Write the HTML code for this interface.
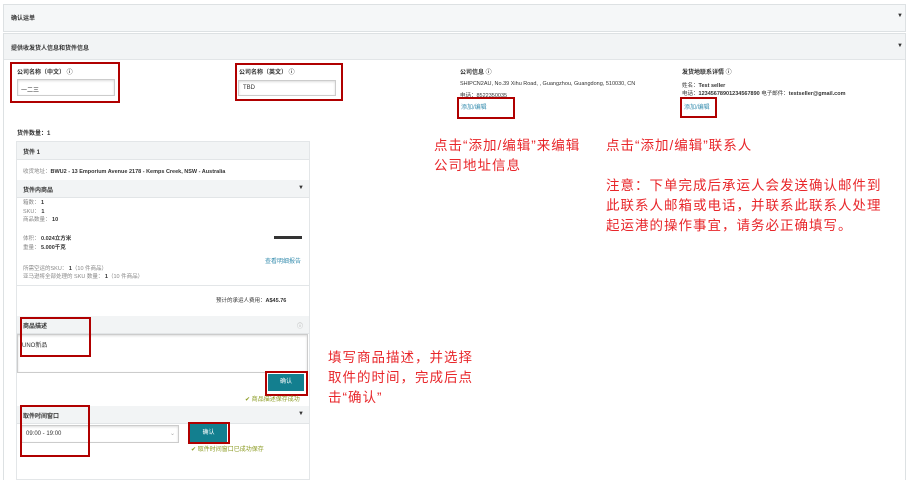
<!DOCTYPE html>
<html><head><meta charset="utf-8"><style>
*{box-sizing:border-box;margin:0;padding:0}
body{width:908px;height:480px;background:#fff;position:relative;overflow:hidden;font-family:"Liberation Sans","Noto Sans CJK SC",sans-serif;color:#333;font-size:6px}
.a{position:absolute}
.rb{position:absolute;border:2px solid #b00000}
.red{position:absolute;color:#e8262a;font-size:13.5px;line-height:20px;letter-spacing:1px;font-family:"Liberation Sans","Noto Sans CJK SC",sans-serif}
.gh{position:absolute;background:#f2f4f5;border-bottom:1px solid #e2e5e7}
.inp{position:absolute;border:1px solid #ccc;background:#fff;box-shadow:inset 0 1px 2px #ddd}
.b{font-weight:bold}
.lk{color:#3a8fb0}
.btn{position:absolute;background:#137f8f;color:#fff;text-align:center;font-size:6px;line-height:17px}
.ok{position:absolute;color:#8a9a20;font-size:6px}
</style></head><body>
<div class="a" style="left:3px;top:4px;width:903px;height:28px;border:1px solid #dde1e3;background:#f5f7f8"></div>
<div class="a b" style="left:11px;top:13px;font-size:6px">确认运单</div>
<div class="a" style="left:897px;top:13px;font-size:6px">▼</div>
<div class="a" style="left:3px;top:33px;width:903px;height:447px;border:1px solid #dde1e3;border-bottom:none"></div>
<div class="gh" style="left:4px;top:34px;width:901px;height:26px"></div>
<div class="a b" style="left:11px;top:43px">提供收发货人信息和货件信息</div>
<div class="a" style="left:897px;top:43px">▼</div>

<div class="a b" style="left:17px;top:67px">公司名称（中文） ⓘ</div>
<div class="inp" style="left:17px;top:79px;width:98px;height:17px"></div>
<div class="a" style="left:21px;top:85px">一二三</div>
<div class="rb" style="left:10px;top:62px;width:110px;height:41px"></div>

<div class="a b" style="left:239px;top:67px">公司名称（英文） ⓘ</div>
<div class="inp" style="left:238px;top:80px;width:98px;height:16px"></div>
<div class="a" style="left:243px;top:85px">TBD</div>
<div class="rb" style="left:235px;top:63px;width:108px;height:38px"></div>

<div class="a b" style="left:460px;top:67px">公司信息 ⓘ</div>
<div class="a" style="left:460px;top:81px;font-size:5.5px">SHIPCN2AU, No.39 Xihu Road, , Guangzhou, Guangdong, 510030, CN</div>
<div class="a" style="left:460px;top:91px;font-size:5.5px">电话：8522350035</div>
<div class="a lk" style="left:461px;top:102px">添加/编辑</div>
<div class="rb" style="left:457px;top:97px;width:58px;height:22px"></div>

<div class="a b" style="left:682px;top:67px">发货地联系详情 ⓘ</div>
<div class="a" style="left:682px;top:81px;font-size:5.5px">姓名：<b>Test seller</b></div>
<div class="a" style="left:682px;top:89px;font-size:5.5px">电话：<b>123456789012345678​90</b> 电子邮件：<b>testseller@gmail.com</b></div>
<div class="a lk" style="left:684px;top:102px">添加/编辑</div>
<div class="rb" style="left:680px;top:97px;width:37px;height:21px"></div>

<div class="red" style="left:434px;top:136px">点击“添加/编辑”来编辑<br>公司地址信息</div>
<div class="red" style="left:606px;top:136px">点击“添加/编辑”联系人</div>
<div class="red" style="left:606px;top:176px">注意：下单完成后承运人会发送确认邮件到<br>此联系人邮箱或电话，并联系此联系人处理<br>起运港的操作事宜，请务必正确填写。</div>
<div class="red" style="left:328px;top:348px">填写商品描述，并选择<br>取件的时间，完成后点<br>击“确认”</div>

<div class="a b" style="left:17px;top:128px">货件数量：1</div>
<div class="a" style="left:16px;top:141px;width:294px;height:339px;border:1px solid #e3e6e8"></div>
<div class="gh" style="left:17px;top:142px;width:292px;height:18px"></div>
<div class="a b" style="left:23px;top:147px">货件 1</div>
<div class="a" style="left:23px;top:167px;font-size:5.5px;color:#888">收货地址：<b style="color:#333">BWU2 - 13 Emporium Avenue 2178 - Kemps Creek, NSW - Australia</b></div>
<div class="gh" style="left:17px;top:180px;width:292px;height:18px"></div>
<div class="a b" style="left:23px;top:185px">货件内商品</div>
<div class="a" style="left:298px;top:185px">▼</div>
<div class="a" style="left:23px;top:199px;color:#888;line-height:8.5px;font-size:5.5px">箱数： <b style="color:#333">1</b><br>SKU： <b style="color:#333">1</b><br>商品数量： <b style="color:#333">10</b></div>
<div class="a" style="left:23px;top:235px;color:#888;line-height:9px;font-size:5.5px">体积： <b style="color:#333">0.024立方米</b><br>重量： <b style="color:#333">5.000千克</b></div>
<div class="a" style="left:274px;top:236px;width:28px;height:3px;background:#333"></div>
<div class="a lk" style="left:265px;top:256px">查看明细报告</div>
<div class="a" style="left:23px;top:265px;color:#888;line-height:8px;font-size:5.5px">所需空运的SKU： <b style="color:#333">1</b>（10 件商品）<br>亚马逊将全部处理的 SKU 数量： <b style="color:#333">1</b>（10 件商品）</div>
<div class="a" style="left:17px;top:285px;width:292px;height:1px;background:#e3e6e8"></div>
<div class="a" style="left:216px;top:296px;font-size:5.5px">预计的承运人费用：<b>A$45.76</b></div>
<div class="gh" style="left:17px;top:316px;width:292px;height:18px"></div>
<div class="a b" style="left:23px;top:321px">商品描述</div>
<div class="a" style="left:297px;top:321px;color:#999">ⓘ</div>
<div class="inp" style="left:17px;top:334px;width:291px;height:39px"></div>
<div class="a" style="left:22px;top:340px">UNO新品</div>
<div class="rb" style="left:20px;top:317px;width:71px;height:40px"></div>
<div class="btn" style="left:268px;top:374px;width:36px;height:17px">确认</div>
<div class="rb" style="left:265px;top:371px;width:43px;height:25px"></div>
<div class="ok" style="left:245px;top:394px">✔ 商品描述保存成功</div>
<div class="gh" style="left:17px;top:406px;width:292px;height:18px"></div>
<div class="a b" style="left:23px;top:411px">取件时间窗口</div>
<div class="a" style="left:298px;top:411px">▼</div>
<div class="inp" style="left:21px;top:425px;width:158px;height:18px"></div>
<div class="a" style="left:26px;top:431px">09:00 - 19:00</div>
<div class="a" style="left:170px;top:430px;color:#aaa">⌄</div>
<div class="rb" style="left:20px;top:405px;width:70px;height:52px"></div>
<div class="btn" style="left:190px;top:424px;width:37px;height:19px;line-height:19px">确认</div>
<div class="rb" style="left:188px;top:422px;width:42px;height:22px"></div>
<div class="ok" style="left:191px;top:444px">✔ 取件时间窗口已成功保存</div>
</body></html>
